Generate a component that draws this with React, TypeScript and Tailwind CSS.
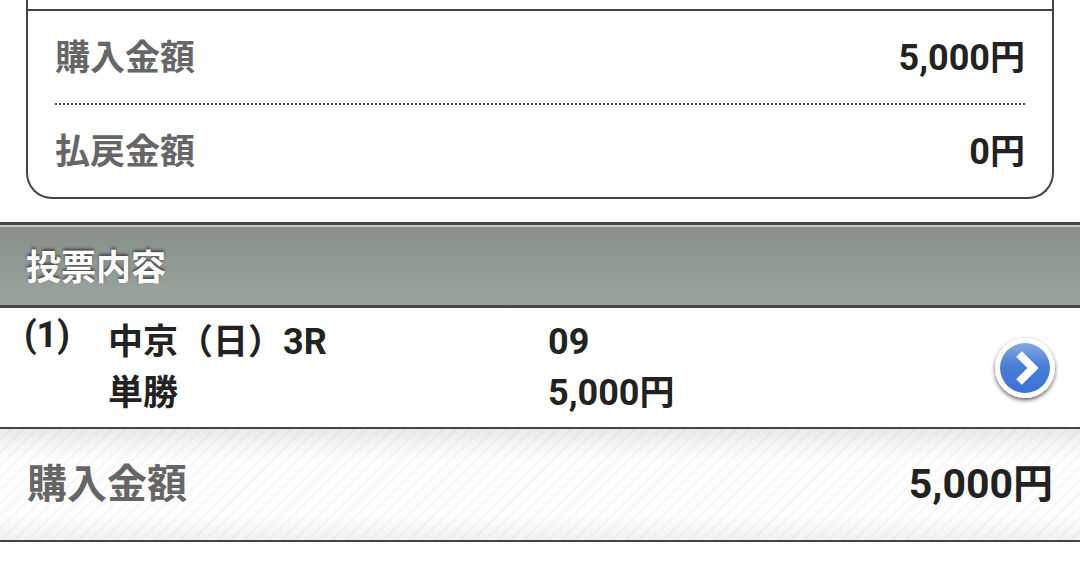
import type { ReactNode } from "react";

const stripes =
  "bg-[linear-gradient(to_bottom,rgba(0,0,0,0.08),rgba(0,0,0,0)_28%,rgba(0,0,0,0)_78%,rgba(0,0,0,0.05)),repeating-linear-gradient(135deg,#fefefe_0px,#fefefe_6px,#f4f4f4_8px,#fefefe_9px)]";

function Yen({ amount }: { amount: string }) {
  return (
    <>
      {amount}
      <span className="text-[35px]">円</span>
    </>
  );
}

function SummaryRow({ label, children }: { label: string; children: ReactNode }) {
  return (
    <div className="flex items-center justify-between">
      <dt className="text-[35px] text-[#666]">{label}</dt>
      <dd className="text-[36px]">{children}</dd>
    </div>
  );
}

function DetailIcon() {
  return (
    <svg viewBox="0 0 72 72" className="size-[72px]" aria-hidden="true">
      <defs>
        <linearGradient id="disc" x1="0" y1="0" x2="0" y2="1">
          <stop offset="0" stopColor="#86a9e2" />
          <stop offset="0.45" stopColor="#4a7dd6" />
          <stop offset="1" stopColor="#3a74d6" />
        </linearGradient>
        <filter id="shade" x="-20%" y="-20%" width="140%" height="140%">
          <feDropShadow dx="0" dy="2" stdDeviation="2" floodColor="#000" floodOpacity="0.65" />
        </filter>
      </defs>
      <circle cx="36" cy="36" r="30" fill="#fff" filter="url(#shade)" />
      <circle cx="36" cy="36" r="25" fill="url(#disc)" />
      <path d="M30 22 L44 36 L30 50" fill="none" stroke="#fff" strokeWidth="8" />
    </svg>
  );
}

export default function App() {
  return (
    <main className="bg-white font-['Roboto','Noto_Sans_CJK_JP',sans-serif] font-bold leading-[51px] text-[#222]" lang="ja">
      <dl className="mx-[26px] rounded-b-[26px] border-x-2 border-b-2 border-[#444]">
        <div className="h-[11px] border-b-2 border-[#444]" />
        <div className="px-[27px]">
          <div className="border-b-2 border-dotted border-[#444] pt-[22px] pb-[19px]">
            <SummaryRow label="購入金額">
              <Yen amount="5,000" />
            </SummaryRow>
          </div>
          <div className="pt-[22px] pb-[19px]">
            <SummaryRow label="払戻金額">
              <Yen amount="0" />
            </SummaryRow>
          </div>
        </div>
      </dl>

      <h2 className="mt-[23px] border-y-[3px] border-[#434646] bg-linear-to-b from-[#888d87] via-[#919b95] to-[#9ba39e] px-[26px] pt-[18px] pb-[11px] text-[35px] text-white shadow-[inset_0_2px_0_#c4c8c4] [text-shadow:0_-2px_3px_#444]">
        投票内容
      </h2>

      <section className="flex items-center border-b-2 border-[#444] pt-[9px] pr-[19px] pb-[8px] pl-[24px]">
        <div className="w-[84px] self-start text-[36px] leading-[36px]">(1)</div>
        <div className="w-[440px] text-[35px]">
          <p>
            中京（日）<span className="text-[36px]">3R</span>
          </p>
          <p>単勝</p>
        </div>
        <div className="flex-1 text-[36px]">
          <p>09</p>
          <p>
            <Yen amount="5,000" />
          </p>
        </div>
        <button type="button" aria-label="詳細" className="rounded-full">
          <DetailIcon />
        </button>
      </section>

      <dl className={`flex items-center justify-between border-b-2 border-[#444] px-[27px] py-[30px] ${stripes}`}>
        <dt className="text-[40px] text-[#666]">購入金額</dt>
        <dd className="text-[41px]">
          5,000<span className="text-[40px]">円</span>
        </dd>
      </dl>
    </main>
  );
}
